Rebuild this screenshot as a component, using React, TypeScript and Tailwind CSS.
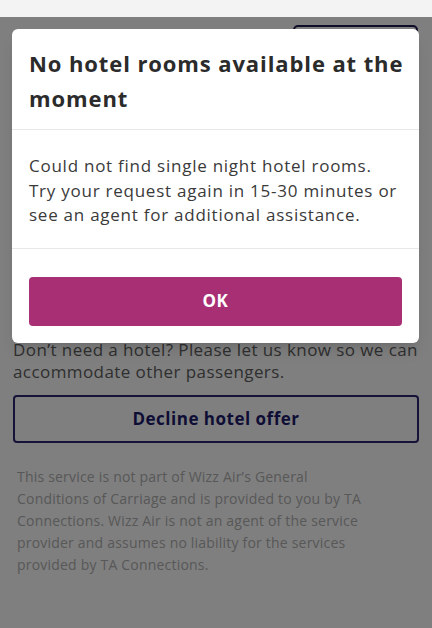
const font = { fontFamily: '"Open Sans", "Noto Sans", sans-serif' }

export default function App() {
  return (
    <div className="relative h-[628px] w-[432px] overflow-hidden bg-white" style={font}>
      <div className="h-[17px] bg-[#f3f3f3]" />

      {/* page behind the dialog */}
      <div className="px-[13px]">
        <div className="flex justify-end pt-[8px] pr-[1px]">
          <div className="h-[44px] w-[125px] rounded-[5px] border-2 border-[#1c1a4f]" />
        </div>
        <div className="h-[270px]" />
        <p className="whitespace-nowrap text-[17px] leading-[22px] tracking-[0.42px] text-[#5e5e5e]">
          Don’t need a hotel? Please let us know so we can
          <br />
          accommodate other passengers.
        </p>
        <button className="mt-[12px] flex h-[48px] w-full items-center justify-center rounded-[4px] border-2 border-[#2a2670] text-[17px] font-bold tracking-[0.5px] text-[#1c1a6a]">
          Decline hotel offer
        </button>
        <p className="mt-[23px] whitespace-nowrap pl-[4px] text-[14px] leading-[22px] tracking-[0.2px] text-[#b0b0b0]">
          This service is not part of Wizz Air’s General
          <br />
          Conditions of Carriage and is provided to you by TA
          <br />
          Connections. Wizz Air is not an agent of the service
          <br />
          provider and assumes no liability for the services
          <br />
          provided by TA Connections.
        </p>
      </div>

      {/* overlay */}
      <div className="absolute inset-x-0 top-[17px] bottom-0 bg-black/50" />

      {/* dialog */}
      <div className="absolute left-[12px] top-[29px] w-[407px] rounded-[6px] bg-white shadow-lg">
        <h1 className="whitespace-nowrap px-[17px] pt-[17px] pb-[13px] text-[22px] font-bold leading-[35px] tracking-[0.9px] text-[#2b2b2b]">
          No hotel rooms available at the
          <br />
          moment
        </h1>
        <div className="h-px bg-[#e8e8e8]" />
        <p className="whitespace-nowrap px-[17px] pt-[24px] pb-[20px] text-[17px] leading-[24.5px] tracking-[0.75px] text-[#3a3a3a]">
          Could not find single night hotel rooms.
          <br />
          Try your request again in 15-30 minutes or
          <br />
          see an agent for additional assistance.
        </p>
        <div className="h-px bg-[#e8e8e8]" />
        <div className="px-[17px] pt-[28px] pb-[17px]">
          <button className="flex h-[49px] w-full items-center justify-center rounded-[4px] bg-[#a92f75] text-[17px] font-bold tracking-[0.5px] text-white">
            OK
          </button>
        </div>
      </div>
    </div>
  )
}
